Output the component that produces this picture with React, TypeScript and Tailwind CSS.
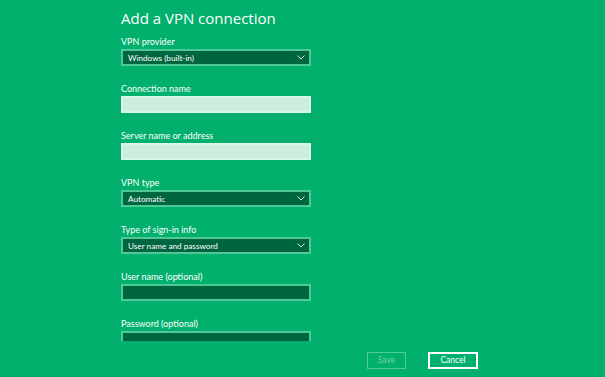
import React from "react";

const font = { fontFamily: '"Segoe UI", "Open Sans", "Noto Sans", sans-serif' };
const small = { fontFamily: 'Lato, "Open Sans", sans-serif' };

function Chevron() {
  return (
    <svg width="8" height="5" viewBox="0 0 8 5" className="shrink-0">
      <path d="M0.5 0.5 L4 4 L7.5 0.5" fill="none" stroke="#cfeee0" strokeWidth="1" />
    </svg>
  );
}

function Label({ text }: { text: string }) {
  return (
    <div className="h-[12px] text-[9px] leading-[12px] text-white whitespace-nowrap" style={small}>
      {text}
    </div>
  );
}

function Select({ label, value }: { label: string; value: string }) {
  return (
    <div className="flex flex-col mb-[17px]">
      <Label text={label} />
      <div className="mt-[1px] h-[17px] w-[190px] border-2 border-[#4fc896] bg-[#00663f] flex items-center justify-between pl-[5px] pr-[4px]">
        <span className="text-[8.2px] text-white leading-none pt-[1px]" style={small}>
          {value}
        </span>
        <Chevron />
      </div>
    </div>
  );
}

function Input({ label, light }: { label: string; light?: boolean }) {
  return (
    <div className="flex flex-col mb-[17px]">
      <Label text={label} />
      <div
        className={
          "mt-[1px] h-[17px] w-[190px] border-2 " +
          (light ? "border-[#dcf5ea] bg-[#cbeedf]" : "border-[#4fc896] bg-[#00663f]")
        }
      />
    </div>
  );
}

export default function App() {
  return (
    <div className="w-[605px] h-[377px] bg-[#00b06c] flex flex-col overflow-hidden" style={font}>
      <div className="h-[341px] overflow-hidden pl-[121px] pt-[8px]">
        <div className="text-[15px] leading-[20px] text-white font-normal">Add a VPN connection</div>
        <div className="mt-[8px] flex flex-col">
          <Select label="VPN provider" value="Windows (built-in)" />
          <Input label="Connection name" light />
          <Input label="Server name or address" light />
          <Select label="VPN type" value="Automatic" />
          <Select label="Type of sign-in info" value="User name and password" />
          <Input label="User name (optional)" />
          <Input label="Password (optional)" />
        </div>
      </div>
      <div className="flex pl-[367px] pt-[11px] gap-[22px]" style={small}>
        <div className="w-[39px] h-[17px] border border-[#4fcb97] flex items-center justify-center text-[8.5px] text-[#6fd3a8]">
          Save
        </div>
        <div className="w-[50px] h-[17px] border-2 border-white flex items-center justify-center text-[8.5px] text-white">
          Cancel
        </div>
      </div>
    </div>
  );
}
